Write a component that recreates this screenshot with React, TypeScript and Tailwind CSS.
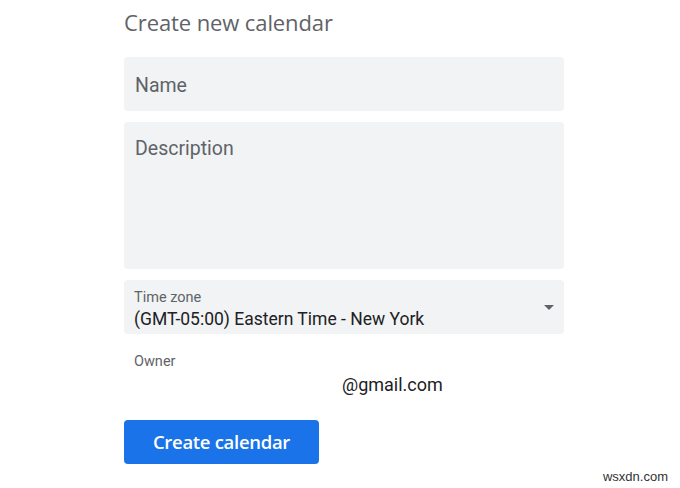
import React from "react";

export default function App() {
  return (
    <div className="relative w-[680px] h-[488px] bg-white overflow-hidden" style={{ fontFamily: "Roboto, 'Liberation Sans', sans-serif" }}>
      <div className="ml-[124px] w-[440px] flex flex-col pt-[8px]">
        <h1 className="text-[22px] leading-[28px] text-[#5f6368] font-['Open_Sans',sans-serif] tracking-[-0.1px]">Create new calendar</h1>
        <div className="mt-[21px] h-[54px] rounded-[4px] bg-[#f1f3f4] flex items-center px-[11px] pt-[3px]">
          <span className="text-[19.5px] text-[#5f6368]">Name</span>
        </div>
        <div className="mt-[11px] h-[147px] rounded-[4px] bg-[#f1f3f4] px-[11px] pt-[15px]">
          <span className="text-[19.5px] leading-[24px] text-[#5f6368]">Description</span>
        </div>
        <div className="mt-[11px] h-[54px] rounded-[4px] bg-[#f1f3f4] flex items-center pl-[10px] pr-[10px]">
          <div className="flex-1 flex flex-col pt-[6px]">
            <span className="text-[14.5px] leading-[16px] text-[#5f6368]">Time zone</span>
            <span className="mt-[1px] text-[17.5px] leading-[24px] text-[#202124]">(GMT-05:00) Eastern Time - New York</span>
          </div>
          <svg width="10" height="5" viewBox="0 0 10 5">
            <path d="M0 0 L10 0 L5 5 Z" fill="#5f6368" />
          </svg>
        </div>
        <div className="mt-[20px] pl-[10px]">
          <div className="text-[14.5px] leading-[16px] text-[#5f6368]">Owner</div>
          <div className="mt-[3px] pl-[208px] text-[18px] leading-[24px] text-[#202124]">@gmail.com</div>
        </div>
        <button className="mt-[23px] w-[195px] h-[44px] rounded-[4px] bg-[#1a73e8] text-white text-[18.5px] font-['Open_Sans',sans-serif] font-semibold tracking-[-0.3px]">
          Create calendar
        </button>
      </div>
      <div className="absolute right-[12px] bottom-[2px] text-[13px] text-[#333] font-['Liberation_Sans',sans-serif]">wsxdn.com</div>
    </div>
  );
}
